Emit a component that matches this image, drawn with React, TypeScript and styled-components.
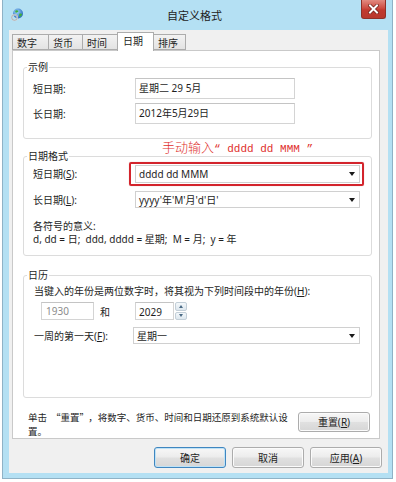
import React from "react";
import styled, { createGlobalStyle } from "styled-components";

const GlobalStyle = createGlobalStyle`
  html, body {
    margin: 0;
    padding: 0;
    background: #ffffff;
  }
  body {
    font-family: "Noto Sans", "Noto Sans CJK SC", sans-serif;
    font-size: 10px;
    color: #1e1e1e;
  }
  * {
    box-sizing: border-box;
  }
`;

const Window = styled.div`
  width: 391px;
  height: 479px;
  margin-left: 2px;
  display: flex;
  flex-direction: column;
  padding: 0 4px 5px 6px;
  background: #b4e0f3;
  border: 1px solid #8fb2c6;
  border-top: none;
`;

const TitleBar = styled.div`
  height: 30px;
  display: grid;
  grid-template-columns: 36px 1fr 44px;
  align-items: start;
`;

const TitleIcon = styled.svg`
  margin: 8px 0 0 2px;
`;

const Title = styled.div`
  text-align: center;
  font-family: "Noto Sans CJK SC", sans-serif;
  font-size: 11px;
  line-height: 30px;
  color: #222;
`;

const CloseButton = styled.div`
  justify-self: end;
  margin-right: 2px;
  width: 25px;
  height: 19px;
  display: flex;
  align-items: center;
  justify-content: center;
  border: 1px solid #8e3128;
  border-top: none;
  border-radius: 0 0 3px 3px;
  background: linear-gradient(#e28a80, #cd4d42 45%, #c13a2f 55%, #b8392e);
`;

const Client = styled.div`
  flex: 1;
  display: flex;
  flex-direction: column;
  background: #f0f0f0;
`;

const TabStrip = styled.div`
  height: 20px;
  display: flex;
  align-items: flex-end;
  padding-left: 3px;
  position: relative;
  z-index: 1;
`;

const Tab = styled.div<{ $w: number; $active?: boolean }>`
  width: ${(p) => p.$w}px;
  height: ${(p) => (p.$active ? 19 : 16)}px;
  margin-left: -1px;
  margin-bottom: ${(p) => (p.$active ? -1 : 0)}px;
  padding: ${(p) => (p.$active ? "1px 0 0 5px" : "1px 0 0 4px")};
  display: flex;
  align-items: ${(p) => (p.$active ? "flex-start" : "center")};
  border: 1px solid #acacac;
  border-bottom: ${(p) => (p.$active ? "none" : "1px solid #acacac")};
  background: ${(p) =>
    p.$active ? "#ffffff" : "linear-gradient(#f2f2f2, #e3e3e3)"};
  position: relative;
  z-index: ${(p) => (p.$active ? 2 : 1)};
  line-height: 14px;

  &:first-child {
    margin-left: 0;
  }
`;

const Panel = styled.div`
  height: 389px;
  margin: 0 8px 0 3px;
  padding: 9px 7px 0 10px;
  display: flex;
  flex-direction: column;
  background: #ffffff;
  border: 1px solid #c9c9c9;
`;

const Group = styled.fieldset<{ $mt?: number }>`
  margin: ${(p) => p.$mt ?? 0}px 0 0 0;
  padding: 0;
  min-width: 0;
  border: 1px solid #dcdcdc;
  border-radius: 3px;
`;

const Legend = styled.legend`
  margin-left: 3px;
  padding: 0 1px;
  line-height: 14px;
`;

const GroupBody = styled.div<{ $pad: string }>`
  padding: ${(p) => p.$pad};
  display: flex;
  flex-direction: column;
`;

const Row = styled.div<{ $mt?: number }>`
  display: flex;
  align-items: center;
  margin-top: ${(p) => p.$mt ?? 0}px;
`;

const FieldLabel = styled.div<{ $w: number }>`
  width: ${(p) => p.$w}px;
  flex: none;
  line-height: 14px;
`;

const Key = styled.span`
  text-decoration: underline;
`;

const TextBox = styled.div<{ $w: number; $h: number; $muted?: boolean }>`
  width: ${(p) => p.$w}px;
  height: ${(p) => p.$h}px;
  flex: none;
  padding: ${(p) => (p.$muted ? "1px 0 0 4px" : "2px 0 0 3px")};
  line-height: 14px;
  background: #ffffff;
  border: 1px solid #d4d4d4;
  border-top-color: #c4c4c4;
  color: ${(p) => (p.$muted ? "#8c8c8c" : "#1e1e1e")};
`;

const Combo = styled.div<{ $w: number; $h: number }>`
  width: ${(p) => p.$w}px;
  height: ${(p) => p.$h}px;
  flex: none;
  display: flex;
  align-items: center;
  padding-left: 3px;
  background: #ffffff;
  border: 1px solid #d0d0d0;
  line-height: 14px;
`;

const ComboText = styled.div`
  flex: 1;
  white-space: nowrap;
`;

const ComboArrow = styled.div`
  width: 15px;
  display: flex;
  justify-content: center;

  &::before {
    content: "";
    border-left: 3.5px solid transparent;
    border-right: 3.5px solid transparent;
    border-top: 4px solid #1a1a1a;
  }
`;

const Highlight = styled.div`
  position: relative;

  &::after {
    content: "";
    position: absolute;
    inset: -3px -4px -3px -6px;
    border: 2px solid #d3242c;
    border-radius: 2px;
    box-shadow: 0 0 1px rgba(160, 20, 20, 0.4);
    pointer-events: none;
  }
`;

const Annotation = styled.div`
  height: 12px;
  margin: 2px 0 -4px 0;
  padding-left: 139px;
  line-height: 12px;
  color: #e0302c;
  white-space: nowrap;
  position: relative;
  z-index: 1;
`;

const AnnoCjk = styled.span`
  font-family: "Noto Sans CJK SC", sans-serif;
  font-size: 13px;
  font-weight: 300;
`;

const AnnoMono = styled.span`
  font-family: "Liberation Mono", "Noto Sans CJK SC", monospace;
  font-size: 11px;
`;

const Note = styled.div`
  line-height: 13px;
`;

const NoteBlock = styled.div`
  margin-top: 12px;
`;

const AndLabel = styled.div`
  width: 41px;
  padding-left: 6px;
  flex: none;
`;

const Spinner = styled.div`
  width: 12px;
  height: 18px;
  margin-left: 1px;
  display: flex;
  flex-direction: column;
  gap: 1px;
`;

const SpinHalf = styled.div<{ $up?: boolean }>`
  flex: 1;
  display: flex;
  align-items: center;
  justify-content: center;
  border: 1px solid #c3cfd8;
  border-radius: 2px;
  background: linear-gradient(#f4f8fb, #dde7ee);

  &::before {
    content: "";
    border-left: 2.5px solid transparent;
    border-right: 2.5px solid transparent;
    ${(p) =>
      p.$up
        ? "border-bottom: 3px solid #4a6a85;"
        : "border-top: 3px solid #4a6a85;"}
  }
`;

const ResetRow = styled.div`
  margin-top: 12px;
  display: flex;
  align-items: flex-start;
`;

const ResetText = styled.div`
  flex: 0 0 266px;
  max-width: 266px;
  padding-left: 5px;
  font-family: "Noto Sans CJK SC", sans-serif;
  font-size: 9.5px;
  line-height: 14px;
`;

const Quote = styled.span<{ $close?: boolean }>`
  margin: ${(p) => (p.$close ? "0 4px 0 0" : "0 0 0 4px")};
`;

const Button = styled.div<{ $w: number; $h: number; $default?: boolean }>`
  width: ${(p) => p.$w}px;
  height: ${(p) => p.$h}px;
  flex: none;
  display: flex;
  align-items: center;
  justify-content: center;
  border: 1px solid ${(p) => (p.$default ? "#3f86c0" : "#acacac")};
  border-radius: 3px;
  background: linear-gradient(#f7f7f7, #ececec 48%, #e0e0e0 52%, #d6d6d6);
  box-shadow: ${(p) =>
    p.$default ? "inset 0 0 0 1px #bfe2f6" : "inset 0 0 0 1px #fbfbfb"};
  line-height: 14px;
`;

const ResetButton = styled(Button)`
  margin: 2px 2px 0 auto;
`;

const ButtonRow = styled.div`
  display: flex;
  justify-content: flex-end;
  gap: 6px;
  padding: 8px 6px 0 0;
`;

function GlobeIcon() {
  return (
    <TitleIcon width="13" height="13" viewBox="0 0 13 13">
      <defs>
        <radialGradient id="g" cx="0.4" cy="0.35" r="0.7">
          <stop offset="0" stopColor="#9fd6ff" />
          <stop offset="1" stopColor="#1f63b8" />
        </radialGradient>
      </defs>
      <circle cx="7" cy="5.5" r="5" fill="url(#g)" />
      <path d="M4.5 2.5 Q6.5 1.8 7.5 3.2 Q6.8 4.6 5 4.8 Q3.6 4.2 4.5 2.5Z" fill="#3fae3a" />
      <path d="M8.5 5.5 Q10.8 5 11.2 6.6 Q10 8.8 8.6 9 Q7.6 7.2 8.5 5.5Z" fill="#3fae3a" />
      <circle cx="3.5" cy="9.5" r="2.8" fill="none" stroke="#d5d9dd" strokeWidth="1.6" />
      <circle cx="3.5" cy="9.5" r="2.8" fill="none" stroke="#8a9096" strokeWidth="0.5" />
    </TitleIcon>
  );
}

function CloseGlyph() {
  return (
    <svg width="11" height="10" viewBox="0 0 11 10">
      <path
        d="M2 1.5 L9 8.5 M9 1.5 L2 8.5"
        stroke="#6d1d16"
        strokeWidth="3.4"
        strokeLinecap="square"
      />
      <path
        d="M2 1.5 L9 8.5 M9 1.5 L2 8.5"
        stroke="#ffffff"
        strokeWidth="2"
        strokeLinecap="square"
      />
    </svg>
  );
}

function ComboBox(props: { w: number; h: number; value: string }) {
  return (
    <Combo $w={props.w} $h={props.h}>
      <ComboText>{props.value}</ComboText>
      <ComboArrow />
    </Combo>
  );
}

export default function App() {
  return (
    <>
      <GlobalStyle />
      <Window lang="zh-CN">
        <TitleBar>
          <GlobeIcon />
          <Title>自定义格式</Title>
          <CloseButton>
            <CloseGlyph />
          </CloseButton>
        </TitleBar>
        <Client>
          <TabStrip>
            <Tab $w={37}>数字</Tab>
            <Tab $w={35}>货币</Tab>
            <Tab $w={36}>时间</Tab>
            <Tab $w={37} $active>
              日期
            </Tab>
            <Tab $w={33}>排序</Tab>
          </TabStrip>
          <Panel>
            <Group>
              <Legend>示例</Legend>
              <GroupBody $pad="4px 0 14px 9px">
                <Row>
                  <FieldLabel $w={102}>短日期:</FieldLabel>
                  <TextBox $w={160} $h={21}>
                    星期二 29 5月
                  </TextBox>
                </Row>
                <Row $mt={4}>
                  <FieldLabel $w={102}>长日期:</FieldLabel>
                  <TextBox $w={160} $h={21}>
                    2012年5月29日
                  </TextBox>
                </Row>
              </GroupBody>
            </Group>

            <Annotation>
              <AnnoCjk>手动输入</AnnoCjk>
              <AnnoMono>“ dddd dd MMM ”</AnnoMono>
            </Annotation>

            <Group>
              <Legend>日期格式</Legend>
              <GroupBody $pad="2px 0 9px 9px">
                <Row>
                  <FieldLabel $w={102}>
                    短日期(<Key>S</Key>):
                  </FieldLabel>
                  <Highlight>
                    <ComboBox w={225} h={18} value="dddd dd MMM" />
                  </Highlight>
                </Row>
                <Row $mt={8}>
                  <FieldLabel $w={102}>
                    长日期(<Key>L</Key>):
                  </FieldLabel>
                  <ComboBox w={225} h={17} value="yyyy'年'M'月'd'日'" />
                </Row>
                <NoteBlock>
                  <Note>各符号的意义:</Note>
                  <Note>d, dd = 日;&nbsp; ddd, dddd = 星期;&nbsp; M = 月;&nbsp; y = 年</Note>
                </NoteBlock>
              </GroupBody>
            </Group>

            <Group $mt={12}>
              <Legend>日历</Legend>
              <GroupBody $pad="2px 0 53px 10px">
                <FieldLabel $w={330}>
                  当键入的年份是两位数字时，将其视为下列时间段中的年份(<Key>H</Key>):
                </FieldLabel>
                <Row $mt={4}>
                  <TextBox $w={53} $h={18} $muted style={{ marginLeft: 7 }}>
                    1930
                  </TextBox>
                  <AndLabel>和</AndLabel>
                  <TextBox $w={39} $h={18}>
                    2029
                  </TextBox>
                  <Spinner>
                    <SpinHalf $up />
                    <SpinHalf />
                  </Spinner>
                </Row>
                <Row $mt={7}>
                  <FieldLabel $w={99}>
                    一周的第一天(<Key>F</Key>):
                  </FieldLabel>
                  <ComboBox w={227} h={17} value="星期一" />
                </Row>
              </GroupBody>
            </Group>

            <ResetRow>
              <ResetText>
                单击<Quote>“</Quote>重置<Quote $close>”</Quote>，将数字、货币、时间和日期还原到系统默认设
                <br />
                置。
              </ResetText>
              <ResetButton $w={72} $h={20}>
                重置(<Key>R</Key>)
              </ResetButton>
            </ResetRow>
          </Panel>
          <ButtonRow>
            <Button $w={72} $h={21} $default>
              确定
            </Button>
            <Button $w={72} $h={21}>
              取消
            </Button>
            <Button $w={72} $h={21}>
              应用(<Key>A</Key>)
            </Button>
          </ButtonRow>
        </Client>
      </Window>
    </>
  );
}
